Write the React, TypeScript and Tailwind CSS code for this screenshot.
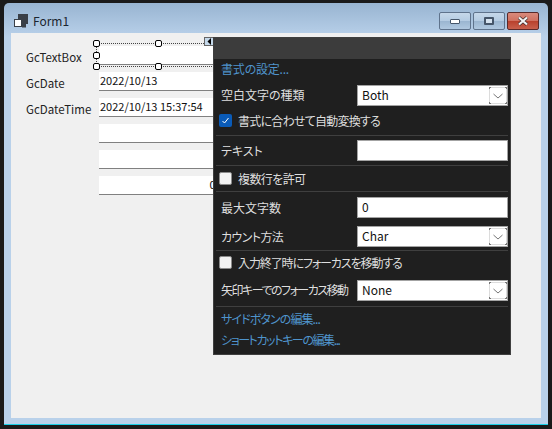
import React from 'react';

const font = '[font-family:"Noto_Sans_CJK_JP","Noto_Sans",sans-serif] [font-feature-settings:"palt"]';

const Sep = () => <div className="h-px mx-[2px] my-0 bg-[#3f3f3f]" />;

const Chevron = () => (
  <svg width="18" height="17" viewBox="0 0 18 17" className="absolute right-0 top-[1px]">
    <rect x="0.5" y="0.5" width="17" height="16" fill="#fff" stroke="#dcdcdc" />
    <path d="M0 .5h2M16 .5h2M.5 0v2M17.5 0v2M.5 15v2M0 16.5h2M16 16.5h2M17.5 15v2" stroke="#777" strokeWidth="1" />
    <path d="M4.5 7L9 11l4.5-4" fill="none" stroke="#777" strokeWidth="1" />
  </svg>
);

const Input = ({ value, combo }: { value?: string; combo?: boolean }) => (
  <div className="relative shrink-0 w-[151px] h-[21px] bg-white border border-[#a3a3a3] pl-[4px] text-[#111] text-[12px] leading-[17px]">
    {value}
    {combo && <Chevron />}
  </div>
);

const Row = ({ label, className, children }: { label: React.ReactNode; className: string; children: React.ReactNode }) => (
  <div className={`flex items-center justify-between pl-[7px] pr-[2px] text-[#dedede] whitespace-nowrap ${className}`}>
    <span>{label}</span>
    {children}
  </div>
);

const Check = ({ label, checked, className }: { label: string; checked?: boolean; className: string }) => (
  <div className={`flex items-center pl-[5px] gap-[6px] text-[#dedede] ${className}`}>
    {checked ? (
      <span className="w-[13px] h-[13px] rounded-[2px] bg-[#0a5bb8] flex items-center justify-center">
        <svg width="9" height="9" viewBox="0 0 9 9">
          <path d="M1.5 5L3.5 7L7.5 2" fill="none" stroke="#fff" strokeWidth="1" />
        </svg>
      </span>
    ) : (
      <span className="w-[13px] h-[13px] rounded-[2px] bg-[#f2f2f2] border border-[#8a8a8a]" />
    )}
    <span>{label}</span>
  </div>
);

const Field = ({ label, value, center }: { label?: string; value?: string; center?: boolean }) => (
  <div className="flex h-[19px] mb-[7px]">
    <div className="shrink-0 w-[88px] pl-[15px] text-[11.5px] leading-[23px] text-[#222] whitespace-nowrap">{label}</div>
    <div className={`shrink-0 w-[226px] h-[19px] bg-white border-b border-[#808080] pl-px text-[11px] leading-[17px] text-[#111] ${center ? 'text-center' : ''}`}>
      {value}
    </div>
  </div>
);

const Handle = ({ x, y }: { x: number; y: number }) => (
  <div className="absolute w-[7px] h-[7px] bg-white border border-black rounded-[2px]" style={{ left: x, top: y }} />
);

const CaptionButton = ({ red, children }: { red?: boolean; children: React.ReactNode }) => (
  <div
    className={`w-[32px] h-[18px] rounded-[2px] border flex items-center justify-center ${
      red
        ? 'border-[#5a2a2a] bg-[linear-gradient(#d98a7c_0%,#d0705f_50%,#b8402c_50%,#c8604c_100%)]'
        : 'border-[#5f738c] bg-[linear-gradient(#c6d8ea_0%,#b4cbe2_50%,#9ab5d0_50%,#b0c8e0_100%)]'
    }`}
  >
    {children}
  </div>
);

const App: React.FC = () => {
  return (
    <div className={`w-[552px] h-[429px] bg-[#1a1a1a] pt-[3px] pl-[4px] overflow-hidden ${font}`}>
      <div className="w-[544px] h-[422px] rounded-t-[5px] border-b border-[#19cfe6] bg-[linear-gradient(#98b4d1_0px,#b9d1ea_34px,#b9d1ea_100%)] px-[7px]">
        {/* title bar */}
        <div className="h-[30px] pt-[6px] flex items-center pr-[2px]">
          <svg width="14" height="14" viewBox="0 0 14 14" className="ml-[3px]">
            <rect x="4" y="0" width="10" height="10" fill="#3a3f47" />
            <rect x="0.5" y="5.5" width="7" height="7" fill="#fff" stroke="#3a3f47" />
            <rect x="8" y="10" width="4" height="3.5" fill="#3a3f47" />
          </svg>
          <span className="ml-[5px] text-[12px] text-[#1b2530]">Form1</span>
          <div className="ml-auto flex gap-[2px]">
            <CaptionButton>
              <span className="w-[10px] h-[5px] bg-white border border-[#46566a] rounded-[1px]" />
            </CaptionButton>
            <CaptionButton>
              <span className="w-[10px] h-[8px] bg-[#d5e2ef] border-2 border-[#46566a] rounded-[1px]" />
            </CaptionButton>
            <CaptionButton red>
              <svg width="12" height="10" viewBox="0 0 12 10">
                <path d="M2 1.5L10 8.5M10 1.5L2 8.5" stroke="#3a2a2a" strokeWidth="3.6" />
                <path d="M2 1.5L10 8.5M10 1.5L2 8.5" stroke="#f4f4f4" strokeWidth="2.2" />
              </svg>
            </CaptionButton>
          </div>
        </div>

        {/* form client area */}
        <div className="relative w-[530px] h-[385px] bg-[#f0f0f0] pt-[13px] overflow-hidden">
          <Field label="GcTextBox" />
          <Field label="GcDate" value="2022/10/13" />
          <Field label="GcDateTime" value="2022/10/13 15:37:54" />
          <Field />
          <Field />
          <Field value="0" center />

          {/* designer selection */}
          <div className="absolute left-[85px] top-[10px] w-[120px] h-px border-t border-dotted border-[#444]" />
          <div className="absolute left-[85px] top-[33px] w-[120px] h-px border-t border-dotted border-[#444]" />
          <div className="absolute left-[85px] top-[10px] h-[23px] w-px border-l border-dotted border-[#444]" />
          <Handle x={82} y={7} />
          <Handle x={144} y={7} />
          <Handle x={82} y={19} />
          <Handle x={82} y={30} />
          <Handle x={144} y={30} />
          <div className="absolute left-[193px] top-[4px] w-[10px] h-[9px] bg-[#c4d8ea] border border-[#666] flex items-center justify-center">
            <svg width="5" height="7" viewBox="0 0 5 7">
              <path d="M4 0v7L0.5 3.5z" fill="#000" />
            </svg>
          </div>

          {/* smart tag panel */}
          <div className="absolute left-[202px] top-[4px] w-[298px] h-[318px] bg-[#1f1f1f] border border-[#3f3f3f] text-[12px]">
            <div className="h-[21px] bg-[#3c3c3c]" />
            <div className="h-[20px] leading-[20px] pl-[7px] text-[#4f94cc] tracking-[-0.2px]">書式の設定...</div>
            <Row label="空白文字の種類" className="h-[32px]">
              <Input value="Both" combo />
            </Row>
            <Check label="書式に合わせて自動変換する" checked className="h-[19px] tracking-[-0.75px]" />
            <div className="h-[5px]" />
            <Sep />
            <Row label="テキスト" className="h-[29px]">
              <Input />
            </Row>
            <Sep />
            <Check label="複数行を許可" className="h-[25px] tracking-[-0.6px]" />
            <Sep />
            <Row label="最大文字数" className="h-[31px]">
              <Input value="0" />
            </Row>
            <Row label={<span className="tracking-[-0.6px]">カウント方法</span>} className="h-[27px]">
              <Input value="Char" combo />
            </Row>
            <Sep />
            <Check label="入力終了時にフォーカスを移動する" className="h-[23px] tracking-[-1.1px]" />
            <Row label={<span className="tracking-[-1.5px]">矢印キーでのフォーカス移動</span>} className="h-[32px]">
              <Input value="None" combo />
            </Row>
            <Sep />
            <div className="h-[23px] leading-[24px] pl-[7px] text-[#4f94cc] tracking-[-0.9px]">サイドボタンの編集...</div>
            <div className="h-[20px] leading-[20px] pl-[7px] text-[#4f94cc] tracking-[-1.4px]">ショートカットキーの編集...</div>
          </div>
        </div>
      </div>
    </div>
  );
};

export default App;
